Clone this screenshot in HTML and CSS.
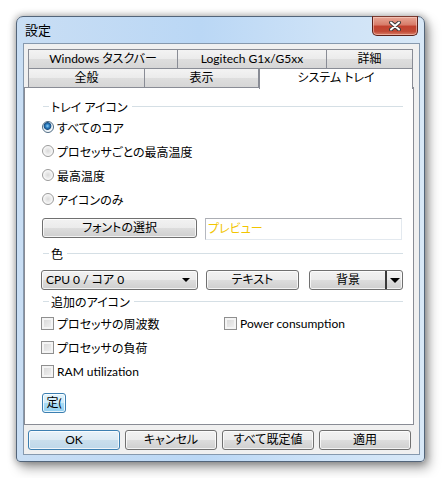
FILE: index.html
```html
<!DOCTYPE html>
<html lang="ja">
<head>
    <meta charset="UTF-8">
    <meta name="viewport" content="width=device-width, initial-scale=1.0">
    <title>設定</title>
    <link rel="stylesheet" href="styles.css">
</head>
<body>

    <div class="window">
        <div class="titlebar">
            <span class="title">設定</span>
            <button class="close" aria-label="閉じる">
                <svg width="12" height="10" viewBox="0 0 12 10">
                    <path d="M2 1.5 L10 8.5 M10 1.5 L2 8.5" stroke="#3b3b3b" stroke-width="4" stroke-linecap="round"/>
                    <path d="M2 1.5 L10 8.5 M10 1.5 L2 8.5" stroke="#ffffff" stroke-width="2" stroke-linecap="round"/>
                </svg>
            </button>
        </div>

        <div class="client">
            <div class="tabs">
                <div class="tab-row">
                    <div class="tab t-taskbar">Windows タスクバー</div>
                    <div class="tab t-logitech">Logitech G1x/G5xx</div>
                    <div class="tab t-detail">詳細</div>
                </div>
                <div class="tab-row row2">
                    <div class="tab t-general">全般</div>
                    <div class="tab t-view">表示</div>
                    <div class="tab t-tray active">システム トレイ</div>
                </div>
            </div>

            <div class="panel">
                <div class="group-head"><span>トレイ アイコン</span></div>
                <ul class="radios">
                    <li><span class="radio on"></span>すべてのコア</li>
                    <li><span class="radio"></span>プロセッサごとの最高温度</li>
                    <li><span class="radio"></span>最高温度</li>
                    <li><span class="radio"></span>アイコンのみ</li>
                </ul>

                <div class="font-row">
                    <button class="btn font-btn">フォントの選択</button>
                    <div class="preview">プレビュー</div>
                </div>

                <div class="group-head"><span>色</span></div>
                <div class="color-row">
                    <div class="btn combo"><span>CPU 0 / コア 0</span><span class="arrow"></span></div>
                    <button class="btn text-btn">テキスト</button>
                    <button class="btn split-btn"><span class="split-label">背景</span><span class="split-drop"><span class="arrow big"></span></span></button>
                </div>

                <div class="group-head"><span>追加のアイコン</span></div>
                <div class="checks">
                    <label class="check"><span class="box"></span>プロセッサの周波数</label>
                    <label class="check"><span class="box"></span>Power consumption</label>
                    <label class="check"><span class="box"></span>プロセッサの負荷</label>
                    <label class="check"></label>
                    <label class="check"><span class="box"></span>RAM utilization</label>
                </div>

                <button class="btn small-btn"><span>定(</span></button>
            </div>

            <div class="buttons">
                <button class="btn ok">OK</button>
                <button class="btn">キャンセル</button>
                <button class="btn">すべて既定値</button>
                <button class="btn">適用</button>
            </div>
        </div>
    </div>

</body>
</html>
```

FILE: styles.css
```css
body {
    margin: 0;
    padding: 16px;
    background: #ffffff;
    font-family: Lato, "Noto Sans CJK JP", sans-serif;
    font-size: 12px;
    font-feature-settings: "palt";
    color: #000;
}
.window {
    box-sizing: border-box;
    width: 409px;
    height: 446px;
    display: flex;
    flex-direction: column;
    padding: 0 4px 6px 6px;
    border: 1px solid #53657a;
    border-radius: 7px 7px 4px 4px;
    background: linear-gradient(90deg, #c9def4 0%, #bad7f5 45%, #cde2f7 75%, #d8e8f7 100%);
    box-shadow: 0 0 7px 1px rgba(0, 0, 0, 0.3), 4px 6px 12px rgba(0, 0, 0, 0.35);
}
.titlebar {
    height: 26px;
    display: flex;
    align-items: center;
    padding-left: 2px;
}
.title {
    font-size: 13px;
    line-height: 16px;
}
.close {
    align-self: flex-start;
    margin: -1px 2px 0 auto;
    width: 46px;
    height: 20px;
    padding: 0;
    display: flex;
    align-items: center;
    justify-content: center;
    border: 1px solid #5b2019;
    border-top-color: #7a3a30;
    border-radius: 0 0 5px 5px;
    background: linear-gradient(#e8a796 0%, #d77a68 45%, #c2412f 50%, #c14a36 80%, #d9806a 100%);
    box-shadow: inset 0 0 0 1px rgba(255, 220, 210, 0.5);
}
.client {
    flex: 1;
    display: flex;
    flex-direction: column;
    padding-top: 5px;
    background: #f0f0f0;
    border: 1px solid #8699ae;
}

/* tabs */
.tabs {
    margin: 0 6px 0 4px;
}
.tab-row {
    display: flex;
    align-items: flex-start;
}
.tab {
    box-sizing: border-box;
    height: 19px;
    line-height: 17px;
    text-align: center;
    border: 1px solid #898c95;
    border-left: none;
    border-bottom: none;
    background: linear-gradient(#f3f3f3, #ebebeb 50%, #dedede 50%, #d6d6d6);
    white-space: nowrap;
}
.tab:first-child {
    border-left: 1px solid #898c95;
}
.t-taskbar { width: 150px; }
.t-logitech { width: 149px; }
.t-detail { flex: 1; }
.t-general { width: 117px; }
.t-view { width: 114px; }
.t-tray { flex: 1; }
.tab.active {
    position: relative;
    z-index: 1;
    height: 21px;
    line-height: 18px;
    margin-bottom: -2px;
    background: #ffffff;
    border-left: 1px solid #898c95;
}

/* page */
.panel {
    box-sizing: border-box;
    height: 338px;
    margin-right: 5px;
    padding: 0 10px 0 17px;
    background: #ffffff;
    border: 1px solid #898c95;
}
.group-head {
    display: flex;
    align-items: center;
    height: 16px;
    margin-left: 1px;
}
.group-head::before,
.group-head::after {
    content: "";
    height: 1px;
    background: #d5dfe5;
}
.group-head::before {
    width: 6px;
    margin-right: 2px;
}
.group-head::after {
    flex: 1;
    margin-left: 4px;
}
.panel > .group-head:first-child {
    margin-top: 10px;
}
.radios {
    list-style: none;
    margin: 1px 0 0;
    padding: 0;
}
.radios li {
    height: 24px;
    display: flex;
    align-items: center;
}
.radio {
    box-sizing: border-box;
    width: 12px;
    height: 12px;
    margin-right: 3px;
    border-radius: 50%;
    border: 1px solid #9a9a9a;
    background: radial-gradient(circle at 50% 50%, #d9d9d9 0, #ececec 3px, #fbfbfb 5px);
}
.radio.on {
    border-color: #4f6c84;
    background: radial-gradient(circle at 45% 40%, #8fd0f5 0, #2a7cc0 2px, #1b4f82 3.5px, #d9e6ef 4.2px, #f6f9fb 5px);
}

.font-row {
    display: flex;
    align-items: flex-start;
    margin-top: 7px;
}
.btn {
    box-sizing: border-box;
    height: 20px;
    padding: 0;
    font: inherit;
    color: #000;
    border: 1px solid #707070;
    border-radius: 3px;
    background: linear-gradient(#f2f2f2 0%, #ebebeb 50%, #dddddd 50%, #cfcfcf 100%);
    box-shadow: inset 0 0 0 1px rgba(255, 255, 255, 0.75);
    line-height: 18px;
}
.font-btn {
    width: 155px;
}
.preview {
    box-sizing: border-box;
    width: 197px;
    height: 22px;
    margin-left: 8px;
    padding-left: 2px;
    line-height: 20px;
    color: #f2c500;
    background: #fff;
    border: 1px solid #e3e9ef;
    border-top-color: #abadb3;
    border-left-color: #b5b8bf;
}
.font-row + .group-head {
    margin-top: 5px;
}
.color-row {
    display: flex;
    margin-top: 9px;
}
.combo {
    width: 157px;
    margin-left: -1px;
    display: flex;
    align-items: center;
    padding: 0 7px 0 4px;
}
.combo span:first-child {
    flex: 1;
}
.arrow {
    width: 0;
    height: 0;
    border-left: 4px solid transparent;
    border-right: 4px solid transparent;
    border-top: 4px solid #000;
}
.arrow.big {
    border-left-width: 5px;
    border-right-width: 5px;
    border-top-width: 5px;
}
.text-btn {
    width: 93px;
    margin-left: 8px;
}
.split-btn {
    width: 94px;
    margin-left: 10px;
    display: flex;
    align-items: stretch;
}
.split-label {
    flex: 1;
    text-align: center;
    padding-left: 1px;
}
.split-drop {
    width: 15px;
    display: flex;
    align-items: center;
    justify-content: center;
    border-left: 2px solid #3a3a3a;
}
.color-row + .group-head {
    margin-top: 3px;
}
.checks {
    display: grid;
    grid-template-columns: 183px auto;
    grid-auto-rows: 24px;
    margin: 2px 0 0 -1px;
}
.check {
    display: flex;
    align-items: center;
    white-space: nowrap;
}
.box {
    box-sizing: border-box;
    width: 13px;
    height: 13px;
    margin-right: 3px;
    border: 1px solid #8f8f8f;
    background: linear-gradient(135deg, #d4d4d4, #f4f4f4);
    box-shadow: inset 0 0 0 2px #f4f4f4;
}
.small-btn {
    display: flex;
    justify-content: center;
    width: 24px;
    margin-top: 10px;
    white-space: nowrap;
    border-color: #3c7fb1;
    background: linear-gradient(#e3f4fc 0%, #cdebfa 50%, #a9dcf6 50%, #93cff0 100%);
    box-shadow: inset 0 0 0 1px rgba(255, 255, 255, 0.8);
}

/* dialog buttons */
.buttons {
    display: flex;
    gap: 5px;
    margin-top: 5px;
    padding-left: 4px;
}
.buttons .btn {
    width: 92px;
}
.buttons .ok {
    border-color: #3c7fb1;
    background: linear-gradient(#e8f2f9 0%, #dbeaf4 50%, #c9deec 50%, #bed7e9 100%);
}
```
